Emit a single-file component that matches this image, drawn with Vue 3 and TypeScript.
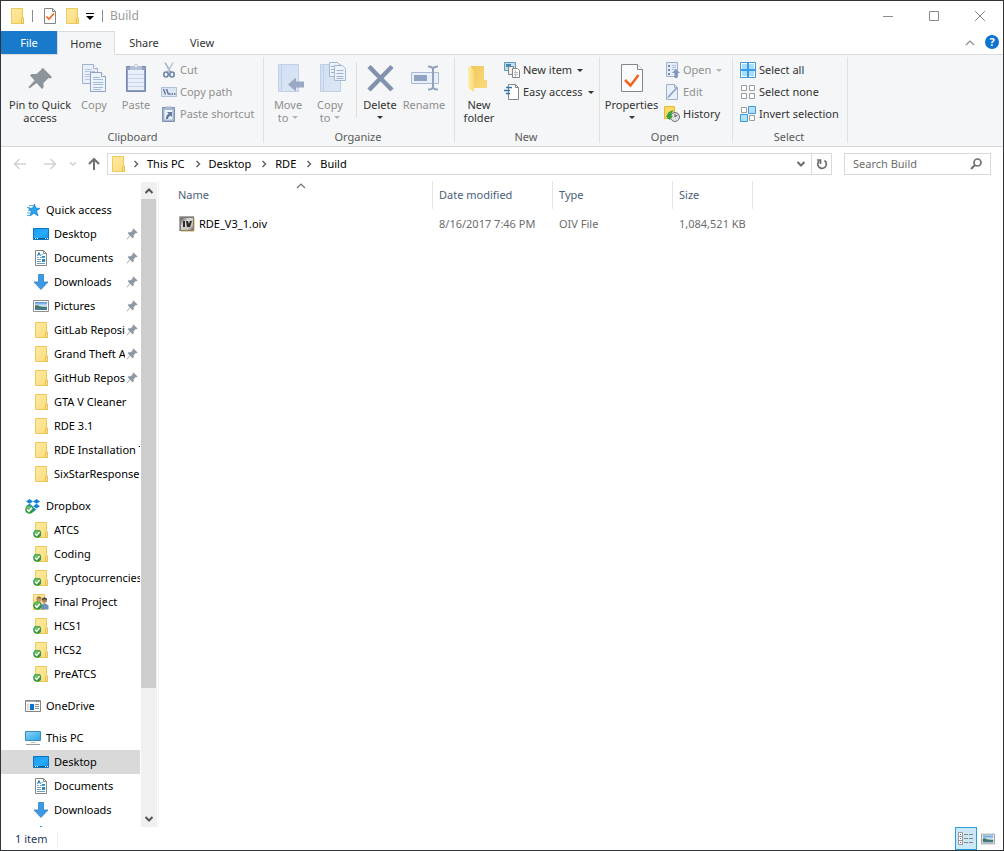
<script setup lang="ts">
import { ref } from 'vue'

interface Command {
  label: string
  icon: string
  disabled?: boolean
  menu?: boolean
}
interface BigCommand {
  lines: string[]
  icon: string
  size: string
  disabled?: boolean
  menu?: 'inline' | 'below'
  divided?: boolean
}
interface Group {
  name: string
  big: BigCommand[]
  small: Command[]
}
interface Place {
  label: string
  icon: string
  pinned?: boolean
  selected?: boolean
  root?: boolean
}

const tabs = ['Home', 'Share', 'View']
const activeTab = ref('Home')
const query = ref('')
const crumbs = ['This PC', 'Desktop', 'RDE', 'Build']

const groups: Group[] = [
  {
    name: 'Clipboard',
    big: [
      { lines: ['Pin to Quick', 'access'], icon: 'pin-big', size: 'wide' },
      { lines: ['Copy'], icon: 'copy', size: 'normal', disabled: true },
      { lines: ['Paste'], icon: 'paste', size: 'normal', disabled: true },
    ],
    small: [
      { label: 'Cut', icon: 'cut', disabled: true },
      { label: 'Copy path', icon: 'copy-path', disabled: true },
      { label: 'Paste shortcut', icon: 'paste-shortcut', disabled: true },
    ],
  },
  {
    name: 'Organize',
    big: [
      { lines: ['Move', 'to'], icon: 'move', size: 'normal', disabled: true, menu: 'inline' },
      { lines: ['Copy', 'to'], icon: 'copy-to', size: 'normal', disabled: true, menu: 'inline' },
      { lines: ['Delete'], icon: 'delete', size: 'mid', menu: 'below', divided: true },
      { lines: ['Rename'], icon: 'rename', size: 'normal', disabled: true },
    ],
    small: [],
  },
  {
    name: 'New',
    big: [{ lines: ['New', 'folder'], icon: 'new-folder', size: 'normal' }],
    small: [
      { label: 'New item', icon: 'new-item', menu: true },
      { label: 'Easy access', icon: 'easy-access', menu: true },
    ],
  },
  {
    name: 'Open',
    big: [{ lines: ['Properties'], icon: 'properties', size: 'props', menu: 'below' }],
    small: [
      { label: 'Open', icon: 'open', disabled: true, menu: true },
      { label: 'Edit', icon: 'edit', disabled: true },
      { label: 'History', icon: 'history' },
    ],
  },
  {
    name: 'Select',
    big: [],
    small: [
      { label: 'Select all', icon: 'select-all' },
      { label: 'Select none', icon: 'select-none' },
      { label: 'Invert selection', icon: 'select-invert' },
    ],
  },
]

const sections: Place[][] = [
  [
    { label: 'Quick access', icon: 'star', root: true },
    { label: 'Desktop', icon: 'desktop', pinned: true },
    { label: 'Documents', icon: 'documents', pinned: true },
    { label: 'Downloads', icon: 'downloads', pinned: true },
    { label: 'Pictures', icon: 'pictures', pinned: true },
    { label: 'GitLab Repositories', icon: 'folder', pinned: true },
    { label: 'Grand Theft Auto V', icon: 'folder', pinned: true },
    { label: 'GitHub Repositories', icon: 'folder', pinned: true },
    { label: 'GTA V Cleaner', icon: 'folder' },
    { label: 'RDE 3.1', icon: 'folder' },
    { label: 'RDE Installation Tool', icon: 'folder' },
    { label: 'SixStarResponse', icon: 'folder' },
  ],
  [
    { label: 'Dropbox', icon: 'dropbox', root: true },
    { label: 'ATCS', icon: 'folder-ok' },
    { label: 'Coding', icon: 'folder-ok' },
    { label: 'Cryptocurrencies', icon: 'folder-ok' },
    { label: 'Final Project', icon: 'folder-shared' },
    { label: 'HCS1', icon: 'folder-ok' },
    { label: 'HCS2', icon: 'folder-ok' },
    { label: 'PreATCS', icon: 'folder-ok' },
  ],
  [{ label: 'OneDrive', icon: 'onedrive', root: true }],
  [
    { label: 'This PC', icon: 'pc', root: true },
    { label: 'Desktop', icon: 'desktop', selected: true },
    { label: 'Documents', icon: 'documents' },
    { label: 'Downloads', icon: 'downloads' },
    { label: 'Music', icon: 'music' },
  ],
]

const files = [{ name: 'RDE_V3_1.oiv', date: '8/16/2017 7:46 PM', type: 'OIV File', size: '1,084,521 KB' }]
</script>

<template>
  <svg class="defs" aria-hidden="true">
    <defs>
      <linearGradient id="g-folder" x1="0" y1="0" x2="1" y2="1">
        <stop offset="0" stop-color="#ffeaa4" /><stop offset="1" stop-color="#fbdc7b" />
      </linearGradient>
      <linearGradient id="g-flap" x1="0" y1="0" x2="1" y2="0">
        <stop offset="0" stop-color="#ffefae" /><stop offset="1" stop-color="#f9d776" />
      </linearGradient>
      <linearGradient id="g-body" x1="0" y1="0" x2="1" y2="1">
        <stop offset="0" stop-color="#f0c75a" /><stop offset="1" stop-color="#fbd97d" />
      </linearGradient>
      <linearGradient id="g-screen" x1="0" y1="0" x2="1" y2="1">
        <stop offset="0" stop-color="#149df5" /><stop offset="0.55" stop-color="#2aaaff" /><stop offset="1" stop-color="#0b8fe8" />
      </linearGradient>
      <linearGradient id="g-pc" x1="0" y1="0" x2="1" y2="1">
        <stop offset="0" stop-color="#8ed6f8" /><stop offset="1" stop-color="#27a4e8" />
      </linearGradient>
      <linearGradient id="g-photo" x1="0" y1="0" x2="0" y2="1">
        <stop offset="0" stop-color="#4b8fdc" /><stop offset="0.5" stop-color="#e3f2fa" /><stop offset="0.7" stop-color="#4f7d80" /><stop offset="1" stop-color="#3c74ab" />
      </linearGradient>
      <linearGradient id="g-blue" x1="0" y1="0" x2="1" y2="1">
        <stop offset="0" stop-color="#d3e0f3" /><stop offset="1" stop-color="#dbe5f4" />
      </linearGradient>
      <linearGradient id="g-oiv" x1="0" y1="0" x2="1" y2="1">
        <stop offset="0" stop-color="#5f5d59" /><stop offset="0.35" stop-color="#d9d8d5" /><stop offset="0.75" stop-color="#c4c2bd" /><stop offset="1" stop-color="#6b6862" />
      </linearGradient>
    </defs>

    <symbol id="folder" viewBox="0 0 16 16">
      <path d="M2.500.5h11v11.500l1 0v3.500h-12z" fill="url(#g-folder)" stroke="#ecca5c" />
      <path d="M12.500 15.500v-4.500l1-1h1v5.500z" fill="#ffe79a" stroke="#e5bf4b" />
    </symbol>
    <symbol id="ok-badge" viewBox="0 0 9 9">
      <circle cx="4.500" cy="4.500" r="4.300" fill="#2f9a3c" />
      <circle cx="4.200" cy="3.500" r="2.800" fill="#64bd67" />
      <path d="M2.200 4.500l1.700 1.800L6.900 2.800" fill="none" stroke="#fff" stroke-width="1.500" />
    </symbol>
    <symbol id="folder-ok" viewBox="0 0 16 16">
      <use href="#folder" width="16" height="16" />
      <use href="#ok-badge" x="0" y="7.500" width="8.500" height="8.500" />
    </symbol>
    <symbol id="folder-shared" viewBox="0 0 16 16">
      <path d="M.5.5h11v15h-11z" fill="url(#g-folder)" stroke="#ecca5c" />
      <circle cx="6" cy="5" r="2.600" fill="#c9975d" /><path d="M3.500 4.500a2.600 2.600 0 0 1 5 0z" fill="#8d7342" />
      <path d="M2.500 13V9.500q3-3 6 0V13z" fill="#b7bd9a" />
      <circle cx="11.500" cy="6.200" r="2.500" fill="#a9825f" /><path d="M8.900 6a2.600 2.600 0 0 1 5.200 0q-2-1.500-5.200 0z" fill="#3f3d3c" />
      <path d="M8 15.500v-4q3.500-4 7.500 0v4z" fill="#6d91b8" />
      <use href="#ok-badge" x="0" y="7" width="9" height="9" />
    </symbol>
    <symbol id="star" viewBox="0 0 16 16">
      <path d="M9.500 2l1.200 4 4.300.4-3.500 2.500 1.500 5-4-2.700-4 2.800 1.200-4.800L3.500 6.700l4.200-.7z" fill="#29a3ee" stroke="#1478cb" stroke-width=".7" />
      <path d="M4 3.500h4M2 5.500h3M3 8.500h2M2 11h3M2 13.500h3" stroke="#4faff0" />
    </symbol>
    <symbol id="desktop" viewBox="0 0 16 16">
      <path d="M.5 2.500h15v11H.5z" fill="url(#g-screen)" stroke="#0c75bd" />
      <path d="M1 12.500h14" stroke="#0a5c9b" /><path d="M2 12.500h1M4 12.500h1M12 12.500h1M14 12.500h1" stroke="#fff" />
    </symbol>
    <symbol id="documents" viewBox="0 0 16 16">
      <path d="M2.500.5h8l3 3v12h-11z" fill="#fff" stroke="#858585" /><path d="M10.500.5v3h3" fill="none" stroke="#858585" />
      <path d="M4.500 6l1.500-3.500L7.500 6M5 4.500h2M8.500 4.500h1M9 6.500h3" fill="none" stroke="#2085c9" />
      <path d="M4 7.500h2M7 7.500h5M4 9.500h4M4 11.500h4M4 13.500h8" stroke="#6f9fbd" /><path d="M9 9h3v3H9z" fill="#2a84c7" />
    </symbol>
    <symbol id="downloads" viewBox="0 0 16 16">
      <path d="M5.500.5h5V8h4.500L8 15.500 1 8h4.500z" fill="#3d9ae5" stroke="#2b80c7" stroke-width=".8" />
    </symbol>
    <symbol id="pictures" viewBox="0 0 16 16">
      <path d="M.5 2.500h15v11H.5z" fill="#fff" stroke="#8f8f8f" /><path d="M2 4h12v8H2z" fill="url(#g-photo)" />
      <path d="M2 7.500q3-1 5 1l7 1V10H2z" fill="#48755e" />
    </symbol>
    <symbol id="dropbox" viewBox="0 0 16 16">
      <path d="M4.500 1l3.500 2.400-3.500 2.400L1 3.400zM11.500 1L15 3.400l-3.500 2.400L8 3.400zM4.500 5.800L8 8.200l-3.500 2.400L1 8.200zM11.500 5.800L15 8.200l-3.500 2.400L8 8.200zM8 9.200l3.500 2.400L8 14l-2-2z" fill="#1681de" />
      <use href="#ok-badge" x="0" y="7" width="9" height="9" />
    </symbol>
    <symbol id="onedrive" viewBox="0 0 16 16">
      <path d="M.5 2.500h15v11H.5z" fill="#fafafa" stroke="#858585" /><path d="M1 3.500h14" stroke="#b2b2b2" /><path d="M11 3.500h4" stroke="#666" stroke-dasharray="1 1" />
      <path d="M5 6h4v6H5z" fill="#0b6fd0" /><path d="M2 6h2v6H2z" fill="#dedede" /><path d="M10 6.500h4M10 8.500h4M10 10.500h4" stroke="#8f8f8f" />
    </symbol>
    <symbol id="pc" viewBox="0 0 16 16">
      <path d="M.5 1.500h15v9H.5z" fill="url(#g-pc)" stroke="#3c8abb" /><path d="M6 12.500h4" stroke="#b4c4cd" /><path d="M1 14.500h14" stroke="#8da0ac" />
    </symbol>
    <symbol id="music" viewBox="0 0 16 16">
      <path d="M7 0h2v2l4 3v3L9 6v6a3 3 0 1 1-2-2z" fill="#1e9be9" />
    </symbol>
    <symbol id="pin" viewBox="0 0 12 12">
      <path d="M7.500.5l4 4-.8.800-.900-.2L7.700 7.300v2.200l-.900.9-2.400-2.400L1 11.500l-.5-.5L4 7.600 1.600 5.200l.9-.9 2.200 0L6.900 2.200l-.2-.9z" fill="#8c98a4" />
    </symbol>

    <symbol id="pin-big" viewBox="0 0 32 32">
      <path d="M19 6l9 9-1.500 1.500-2-.5-5 5v4.500L18 27l-5.500-6-7 5.500L4.500 25l6-6.500-4.500-5L7.500 12h5l5-4.500-.5-.5z" fill="#8c949c" />
    </symbol>
    <symbol id="copy" viewBox="0 0 32 32">
      <g fill="#e9f0fa" stroke="#9eb0cd"><path d="M4.500 2.500h11l4 4v15h-15z" /><path d="M15.500 2.500v4h4" fill="#fff" /></g>
      <path d="M7 7.500h7M7 9.500h10M7 12.500h10M7 14.500h10M7 17.500h10" stroke="#b5c6e0" />
      <g fill="#edf3fb" stroke="#8fa3c3"><path d="M12.500 10.500h11l4 4v15h-15z" /><path d="M23.500 10.500v4h4" fill="#fff" /></g>
      <path d="M15 15.500h7M15 17.500h10M15 20.500h10M15 22.500h10M15 25.500h10M15 27.500h8" stroke="#a8bbda" />
    </symbol>
    <symbol id="paste" viewBox="0 0 32 32">
      <path d="M6.500 4.500h19v25h-19z" fill="#8fa2c4" stroke="#7489ad" /><path d="M8 8h16v20H8z" fill="#e9f0fb" />
      <path d="M8 12.500h16M8 16.500h16M8 20.500h16M8 24.500h16" stroke="#c6d5ec" /><path d="M10 4h4a2 2 0 0 1 4 0h4v4H10z" fill="#b5c2d6" /><path d="M15 3h2v2h-2z" fill="#f3f6fa" />
    </symbol>
    <symbol id="cut" viewBox="0 0 16 16">
      <path d="M3 0l2 1 5.500 9-1.500 1z" fill="#9cabbf" /><path d="M13 0l-2 1L5.500 10 7 11z" fill="#b7c4d6" />
      <ellipse cx="5" cy="12.500" rx="2.200" ry="2.500" fill="none" stroke="#6f86ab" stroke-width="1.600" /><ellipse cx="11" cy="12.500" rx="2.200" ry="2.500" fill="none" stroke="#6f86ab" stroke-width="1.600" />
    </symbol>
    <symbol id="copy-path" viewBox="0 0 16 16">
      <path d="M.5 3.500h15v9H.5z" fill="#dce6f4" stroke="#b0bfd6" /><path d="M2.500 5l2 5.500M5.500 5l2 5.500" stroke="#53688c" stroke-width="1.200" /><path d="M8 10h1.500M10.500 10H12M13 10h1.500" stroke="#53688c" stroke-width="1.500" />
    </symbol>
    <symbol id="paste-shortcut" viewBox="0 0 16 16">
      <path d="M1.500 1.500h12v14h-12z" fill="#a4b5d0" stroke="#7c91b5" /><path d="M3.500 4h8v9.500h-8z" fill="#edf3fb" /><path d="M4.500.5h6v3h-6z" fill="#a9b8cf" />
      <path d="M6 6h5v5l-1.500-1.500Q7 10.500 7 13H5q-.5-3.500 2.700-5.300z" fill="#60789f" />
    </symbol>
    <symbol id="move" viewBox="0 0 32 32">
      <path d="M6.500 2.500h20v27h-20z" fill="url(#g-blue)" stroke="#bfd0e7" /><path d="M9.500 3v26" stroke="#bed0e8" />
      <path d="M16 22.500l8-7v4h8v6h-8v4z" fill="#99a8c3" />
    </symbol>
    <symbol id="copy-to" viewBox="0 0 32 32">
      <path d="M6.500 2.500h20v27h-20z" fill="url(#g-blue)" stroke="#bfd0e7" /><path d="M9.500 3v26" stroke="#bed0e8" />
      <g fill="#edf3fb" stroke="#a5b7d1"><path d="M15.500.5h8l3 3v11h-11z" /><path d="M20.500 3.500h8l3 3v12h-11z" /></g>
      <path d="M17 4.500h3M17 7.500h3M17 10.500h3M22.500 8.500h7M22.500 11.500h7M22.500 14.500h7M22.500 16.500h7" stroke="#9fb1cf" />
    </symbol>
    <symbol id="delete" viewBox="0 0 32 32">
      <path d="M5 4.500L28 28M28 4.500L5 28" stroke="#8291ad" stroke-width="4.500" />
    </symbol>
    <symbol id="rename" viewBox="0 0 32 32">
      <path d="M3.500 10.500h27v11h-27z" fill="#e8effa" stroke="#a9bad4" /><path d="M6 13h13v6H6z" fill="#8fa2c2" />
      <path d="M20 4.500q5 0 5 3v17q0 3-5 3M30 4.500q-5 0-5 3M30 27.500q-5 0-5-3" fill="none" stroke="#91a2be" stroke-width="2" />
    </symbol>
    <symbol id="new-folder" viewBox="0 0 32 32">
      <path d="M8 4h13v14h3v8H10z" fill="url(#g-body)" /><path d="M5 4l6 4v22l-6-4z" fill="url(#g-flap)" />
    </symbol>
    <symbol id="properties" viewBox="0 0 32 32">
      <path d="M5.500 2.500h16l5 5v22h-21z" fill="#fafbfc" stroke="#868686" /><path d="M21.500 2.500v5h5" fill="#fff" stroke="#868686" />
      <path d="M9 18l5.500 5.500L22.500 13" fill="none" stroke="#f2651f" stroke-width="2.500" />
    </symbol>
    <symbol id="props-small" viewBox="0 0 16 16">
      <path d="M2.500.5h8l3 3v12h-11z" fill="#fff" stroke="#858585" /><path d="M10.500.5v3h3" fill="none" stroke="#858585" /><path d="M4.500 8.500l2.500 2.500 5-5.500" fill="none" stroke="#f2651f" stroke-width="1.700" />
    </symbol>
    <symbol id="new-item" viewBox="0 0 16 16">
      <path d="M.5.5h11v8H.5z" fill="#c6dff0" stroke="#5d98bb" /><path d="M2 2h5v3H2z" fill="#3d86b5" />
      <path d="M4.500 4.500h5v8h-5z" fill="#eee" stroke="#858585" /><path d="M8.500 6.500h5l2 2v7h-7z" fill="#fff" stroke="#858585" /><path d="M10 10.500h4M10 12.500h4" stroke="#a6bde0" /><path d="M11.500 8v7" stroke="#e0b7b7" />
    </symbol>
    <symbol id="easy-access" viewBox="0 0 16 16">
      <path d="M4.500.5h7l3 3v12h-10z" fill="#fff" stroke="#858585" /><path d="M11.500.5v3h3" fill="none" stroke="#858585" /><path d="M2 3.500h6M0 6.500h6M2 9.500h4" stroke="#3574a8" stroke-width="1.500" />
    </symbol>
    <symbol id="open" viewBox="0 0 16 16">
      <path d="M2.500.5h11v14h-11z" fill="#e6edf8" stroke="#a1b1cc" /><path d="M4 3h2v2H4zM4 7h2v2H4zM4 11h2v2H4z" fill="#6f88b0" /><path d="M8 3.500h4M8 5.500h4M8 7.500h4" stroke="#b1c1d9" /><path d="M12 7l4 4h-2.500v5h-3v-5H8z" fill="#7f96bb" />
    </symbol>
    <symbol id="edit" viewBox="0 0 16 16">
      <path d="M2.500.5h8l3 3v12h-11z" fill="#e9f0fa" stroke="#a1b1cc" /><path d="M10.500.5v3h3" fill="none" stroke="#a1b1cc" /><path d="M13.500 4.500L5.500 13l-2.500 1.500L4 12l8-8.500z" fill="#91a6c9" />
    </symbol>
    <symbol id="history" viewBox="0 0 16 16">
      <path d="M.5.5h10v12H.5z" fill="#fcd965" stroke="#e9b935" /><circle cx="11" cy="11" r="4.500" fill="#dedede" stroke="#707070" /><path d="M11 8v3l2.500-2" fill="none" stroke="#555" />
      <path d="M3 9q2-5 7-4.500Q7 6 7.500 10H9l-3.500 4L2 10.500z" fill="#35a33e" />
    </symbol>
    <symbol id="select-all" viewBox="0 0 16 16">
      <path d="M.5.5h15v15H.5z" fill="#fff" stroke="#3a9ae8" /><path d="M2 2h5v5H2zM9 2h5v5H9zM2 9h5v5H2zM9 9h5v5H9z" fill="#a9dcfb" /><path d="M8 0v16M0 8h16" stroke="#3a9ae8" stroke-width="2" />
    </symbol>
    <symbol id="select-none" viewBox="0 0 16 16">
      <path d="M1.500 1.500h5v5h-5zM9.500 1.500h5v5h-5zM1.500 9.500h5v5h-5zM9.500 9.500h5v5h-5z" fill="#fff" stroke="#9c9c9c" />
    </symbol>
    <symbol id="select-invert" viewBox="0 0 16 16">
      <path d="M1.500 1.500h5v5h-5zM9.500 9.500h5v5h-5z" fill="#fff" stroke="#9c9c9c" /><path d="M8.500.5h7v7h-7zM.5 8.500h7v7h-7z" fill="#b5e0fb" stroke="#3a9ae8" />
    </symbol>

    <symbol id="arrow-left" viewBox="0 0 14 14"><path d="M13 7H2M6.500 2L1.500 7l5 5" fill="none" stroke="currentColor" stroke-width="1.500" /></symbol>
    <symbol id="arrow-right" viewBox="0 0 14 14"><path d="M1 7h11M7.500 2l5 5-5 5" fill="none" stroke="currentColor" stroke-width="1.500" /></symbol>
    <symbol id="arrow-up" viewBox="0 0 14 14"><path d="M7 13V2M2 7l5-5 5 5" fill="none" stroke="currentColor" stroke-width="2" /></symbol>
    <symbol id="chev-down" viewBox="0 0 10 10"><path d="M1.500 3L5 6.500 8.500 3" fill="none" stroke="currentColor" stroke-width="2" /></symbol>
    <symbol id="chev-up" viewBox="0 0 10 10"><path d="M1.500 7L5 3.500 8.500 7" fill="none" stroke="currentColor" stroke-width="2" /></symbol>
    <symbol id="chev-thin" viewBox="0 0 10 10"><path d="M1 7l4-4 4 4" fill="none" stroke="currentColor" stroke-width="1.200" /></symbol>
    <symbol id="chev-right" viewBox="0 0 8 8"><path d="M2.500 1l3 3-3 3" fill="none" stroke="currentColor" stroke-width="1.500" /></symbol>
    <symbol id="refresh" viewBox="0 0 12 12"><path d="M8.500 2.500A4.300 4.300 0 1 1 3 3M4.500 6V2H1" fill="none" stroke="currentColor" stroke-width="1.700" /></symbol>
    <symbol id="search" viewBox="0 0 12 12"><circle cx="7.500" cy="4.500" r="3.500" fill="none" stroke="currentColor" stroke-width="1.700" /><path d="M5 7L1 11" stroke="currentColor" stroke-width="2" /></symbol>
    <symbol id="minimize" viewBox="0 0 12 12"><path d="M1 6.500h10" stroke="currentColor" /></symbol>
    <symbol id="maximize" viewBox="0 0 12 12"><path d="M1.500 1.500h9v9h-9z" fill="none" stroke="currentColor" /></symbol>
    <symbol id="close" viewBox="0 0 12 12"><path d="M1 1l10 10M11 1L1 11" stroke="currentColor" /></symbol>
    <symbol id="oiv" viewBox="0 0 16 16">
      <path d="M1 1h14v14H1z" fill="#4d4b48" /><path d="M1 15V1h14" fill="none" stroke="#8d8b87" stroke-width="1.500" /><path d="M15 2v13H2" fill="none" stroke="#c9b06a" stroke-width="1" />
      <path d="M2 2h12v12H2z" fill="url(#g-oiv)" /><path d="M4 5h2v6H4zM7 5h2l1 3 1-3h2l-2 6H8z" fill="#2c2c2c" />
    </symbol>
    <symbol id="view-details" viewBox="0 0 16 16">
      <path d="M.5 1.500h4v12h-4zM.5 5.500h4M.5 9.500h4" fill="#fff" stroke="#999" /><path d="M2 3.500h1" stroke="#555" /><path d="M2 7.500h1" stroke="#248bd2" /><path d="M2 11.500h1" stroke="#d43a3a" />
      <path d="M6 3.500h4M11 3.500h4M6 7.500h4M11 7.500h4M6 11.500h4M11 11.500h4" stroke="#858585" />
    </symbol>
  </svg>

  <div class="window">
    <header class="titlebar">
      <svg class="i16"><use href="#folder" /></svg>
      <span class="bar first"></span>
      <button class="quick" aria-label="Properties"><svg class="i16"><use href="#props-small" /></svg></button>
      <button class="quick" aria-label="New folder"><svg class="i16"><use href="#folder" /></svg></button>
      <button class="customize" aria-label="Customize Quick Access Toolbar"><span class="dash"></span><span class="caret"></span></button>
      <span class="bar"></span>
      <h1 class="title">Build</h1>
      <button class="caption" aria-label="Minimize"><svg class="i12"><use href="#minimize" /></svg></button>
      <button class="caption" aria-label="Maximize"><svg class="i12"><use href="#maximize" /></svg></button>
      <button class="caption" aria-label="Close"><svg class="i12"><use href="#close" /></svg></button>
    </header>

    <nav class="tabs" aria-label="Ribbon tabs">
      <button class="tab file">File</button>
      <button v-for="t in tabs" :key="t" class="tab" :class="{ active: t === activeTab }" @click="activeTab = t">{{ t }}</button>
      <span class="grow"></span>
      <button class="collapse" aria-label="Minimize the Ribbon"><svg class="i10"><use href="#chev-thin" /></svg></button>
      <button class="help" aria-label="Help">?</button>
    </nav>

    <section class="ribbon">
      <div v-for="g in groups" :key="g.name" class="group" :class="g.name.toLowerCase()">
        <div class="commands">
          <template v-for="b in g.big" :key="b.icon">
            <span v-if="b.divided" class="divider"></span>
            <button class="big" :class="b.size" :disabled="b.disabled">
              <svg class="i32"><use :href="'#' + b.icon" /></svg>
              <span v-for="(line, n) in b.lines" :key="line" class="line">{{ line }}<span v-if="b.menu === 'inline' && n === 1" class="caret after"></span></span>
              <span v-if="b.menu === 'below'" class="line"><span class="caret"></span></span>
            </button>
          </template>
          <div v-if="g.small.length" class="stack">
            <button v-for="c in g.small" :key="c.label" class="small" :disabled="c.disabled">
              <svg class="i16"><use :href="'#' + c.icon" /></svg>
              <span>{{ c.label }}</span>
              <span v-if="c.menu" class="caret"></span>
            </button>
          </div>
        </div>
        <div class="group-name">{{ g.name }}</div>
      </div>
    </section>

    <div class="address-row">
      <button class="nav" disabled aria-label="Back"><svg class="i14"><use href="#arrow-left" /></svg></button>
      <button class="nav" disabled aria-label="Forward"><svg class="i14"><use href="#arrow-right" /></svg></button>
      <button class="nav recent" disabled aria-label="Recent locations"><svg class="i8"><use href="#chev-down" /></svg></button>
      <button class="nav up" aria-label="Up"><svg class="i14"><use href="#arrow-up" /></svg></button>
      <div class="address">
        <svg class="i16"><use href="#folder" /></svg>
        <template v-for="c in crumbs" :key="c">
          <svg class="i8 sep"><use href="#chev-right" /></svg>
          <button class="crumb">{{ c }}</button>
        </template>
        <span class="grow"></span>
        <button class="tool" aria-label="Previous locations"><svg class="i10"><use href="#chev-down" /></svg></button>
        <button class="tool reload" aria-label="Refresh"><svg class="i12"><use href="#refresh" /></svg></button>
      </div>
      <label class="search">
        <input v-model="query" type="text" placeholder="Search Build" aria-label="Search Build" />
        <svg class="i12"><use href="#search" /></svg>
      </label>
    </div>

    <main class="content">
      <nav class="tree" aria-label="Navigation pane">
        <ul v-for="(s, n) in sections" :key="n">
          <li v-for="p in s" :key="p.label">
            <a href="#" class="place" :class="{ root: p.root, selected: p.selected }">
              <svg class="i16"><use :href="'#' + p.icon" /></svg>
              <span class="place-name">{{ p.label }}</span>
              <svg v-if="p.pinned" class="i12"><use href="#pin" /></svg>
            </a>
          </li>
        </ul>
      </nav>
      <div class="scrollbar">
        <button aria-label="Scroll up"><svg class="i10"><use href="#chev-up" /></svg></button>
        <div class="track"><div class="thumb"></div></div>
        <button aria-label="Scroll down"><svg class="i10"><use href="#chev-down" /></svg></button>
      </div>
      <div class="files">
        <table>
          <colgroup><col class="c-name" /><col class="c-mid" /><col class="c-mid" /><col class="c-size" /></colgroup>
          <thead>
            <tr>
              <th scope="col">Name<svg class="i10 sort"><use href="#chev-thin" /></svg></th>
              <th scope="col">Date modified</th>
              <th scope="col">Type</th>
              <th scope="col">Size</th>
            </tr>
          </thead>
          <tbody>
            <tr v-for="f in files" :key="f.name">
              <td><span class="file-name"><svg class="i16"><use href="#oiv" /></svg>{{ f.name }}</span></td>
              <td>{{ f.date }}</td>
              <td>{{ f.type }}</td>
              <td class="num">{{ f.size }}</td>
            </tr>
          </tbody>
        </table>
      </div>
    </main>

    <footer class="status">
      <span class="count">1 item</span>
      <span class="grow"></span>
      <button class="view on" aria-label="Details view"><svg class="i16"><use href="#view-details" /></svg></button>
      <button class="view" aria-label="Large icons view"><svg class="i14"><use href="#pictures" /></svg></button>
    </footer>
  </div>
</template>

<style>
body { margin: 0; }
</style>

<style scoped>
* { box-sizing: border-box; }
.defs { position: absolute; width: 0; height: 0; }
svg { display: block; flex: none; }
.i8 { width: 8px; height: 8px; }
.i10 { width: 10px; height: 10px; }
.i12 { width: 12px; height: 12px; }
.i14 { width: 14px; height: 14px; }
.i16 { width: 16px; height: 16px; }
.i32 { width: 32px; height: 32px; }
.grow { flex: 1; }

.window {
  display: flex;
  flex-direction: column;
  height: 100vh;
  border: 1px solid #333438;
  background: #fff;
  color: #000;
  font: 11px/16px "Segoe UI", "Noto Sans", sans-serif;
}
button {
  display: flex;
  align-items: center;
  justify-content: center;
  margin: 0;
  padding: 0;
  border: 0;
  background: none;
  color: inherit;
  font: inherit;
  white-space: nowrap;
}
.caret {
  flex: none;
  width: 0;
  height: 0;
  border: 3px solid transparent;
  border-top-color: currentColor;
  border-bottom: 0;
}

.titlebar { display: flex; flex: none; align-items: center; height: 30px; padding-left: 8px; }
.bar { width: 1px; height: 12px; background: #8a8a8a; }
.bar.first { margin: 0 6px 0 7px; }
.quick { width: 22px; height: 22px; }
.customize { flex-direction: column; gap: 2px; width: 14px; margin-right: 5px; }
.customize .caret { border-width: 4px 4px 0; }
.dash { width: 8px; height: 1px; background: #000; }
.title { flex: 1; margin: 0 0 0 7px; color: #999; font-size: 12px; font-weight: 400; line-height: 16px; }
.caption { width: 46px; height: 30px; color: #8c8c8c; }

.tabs { display: flex; flex: none; height: 24px; border-bottom: 1px solid #dadbdc; }
.tab { height: 23px; width: 58px; color: #333; }
.tab.file { width: 56px; background: #1979ca; color: #fff; }
.tab.active { height: 24px; border: 1px solid #dadbdc; border-bottom: 0; background: #f5f6f7; }
.collapse { width: 24px; color: #8a8a8a; }
.help {
  width: 14px;
  height: 14px;
  margin: 4px 4px 0 3px;
  border-radius: 50%;
  background: #0d72d0;
  color: #fff;
  font-weight: 700;
}

.ribbon {
  display: flex;
  flex: none;
  padding: 2px 0 3px;
  border-bottom: 1px solid #d6d7d8;
  background: #f5f6f7;
  color: #333;
}
.group { padding: 2px 0 0 3px; border-right: 1px solid #e0e1e3; }
.group.clipboard { width: 263px; padding-left: 6px; }
.group.organize { width: 191px; }
.group.new { width: 145px; }
.group.open { width: 133px; }
.group.select { width: 115px; }
.commands { display: flex; height: 72px; }
.group-name { padding-right: 5px; color: #5a5a5a; line-height: 12px; text-align: center; }
.big { flex: none; flex-direction: column; justify-content: flex-start; width: 42px; padding-top: 3px; line-height: 13px; }
.big.wide { width: 66px; }
.big.mid { width: 46px; }
.big.props { width: 57px; }
.big .i32 { margin-bottom: 4px; }
.line { display: flex; align-items: center; height: 13px; }
.after { margin-left: 4px; }
button:disabled { color: #8f8f8f; }
button:disabled .caret { color: #b5b5b5; }
.divider { width: 1px; height: 56px; margin: 3px 0 0 5px; background: #dcdde0; }
.stack { margin-left: 4px; }
.small { gap: 3px; height: 22px; }
.small .caret { margin-left: 2px; }

.address-row { display: flex; flex: none; align-items: center; height: 33px; padding: 0 12px 0 4px; }
.nav { flex: none; width: 30px; height: 22px; color: #707070; }
.nav:disabled { color: #d2d2d2; }
.nav.recent { width: 16px; }
.nav.up { width: 26px; }
.address { display: flex; flex: 1; align-items: center; height: 22px; padding-left: 2px; border: 1px solid #d9d9d9; }
.address .sep { margin: 0 4px 0 6px; color: #666; }
.crumb { padding: 0 3px; }
.tool { width: 20px; height: 20px; color: #6d6d6d; }
.tool.reload { border-left: 1px solid #d9d9d9; }
.search { display: flex; flex: none; align-items: center; width: 147px; height: 22px; margin-left: 12px; padding: 0 8px; border: 1px solid #d9d9d9; color: #707070; }
.search input { flex: 1; min-width: 0; padding: 0; border: 0; outline: 0; background: none; font: inherit; }
.search input::placeholder { color: #6d6d6d; opacity: 1; }

.content { display: flex; flex: 1; min-height: 0; }
.tree { flex: none; width: 140px; padding-top: 18px; overflow: hidden; }
.tree ul { margin: 0 0 8px; padding: 0; list-style: none; }
.place { display: flex; align-items: center; gap: 5px; height: 24px; padding: 0 1px 0 32px; color: #000; text-decoration: none; }
.place.root { padding-left: 24px; }
.place.selected { margin-right: 1px; background: #d9d9d9; }
.place-name { flex: 1; overflow: hidden; white-space: nowrap; }
.place .i12 { margin: 0 2px 0 -4px; }
.scrollbar { display: flex; flex: none; flex-direction: column; width: 16px; margin-top: 2px; background: #f0f0f0; }
.scrollbar button { height: 17px; color: #555; }
.track { flex: 1; }
.thumb { height: 80%; margin-right: 1px; background: #cdcdcd; }
.files { flex: 1; margin-left: 1px; border-left: 1px solid #f3f3f3; overflow: hidden; }
table { width: 594px; margin-top: 1px; border-collapse: separate; border-spacing: 0; table-layout: fixed; }
.c-name { width: 274px; }
.c-mid { width: 120px; }
.c-size { width: 80px; }
th, td { padding: 0 6px; text-align: left; font-weight: 400; white-space: nowrap; }
th { position: relative; height: 28px; border-right: 1px solid #e5e5e5; color: #4c607a; }
th:first-child { padding-left: 19px; }
td { height: 30px; color: #6d6d6d; }
td:first-child { padding-left: 20px; color: #000; }
td.num { padding-right: 8px; text-align: right; }
.file-name { display: flex; align-items: center; gap: 4px; }
.sort { position: absolute; top: 0; left: 50%; color: #707070; }

.status { display: flex; flex: none; align-items: center; height: 23px; padding-right: 4px; color: #1e395b; }
.count { padding: 0 10px 0 14px; border-right: 1px solid #f0f0f0; }
.view { width: 22px; height: 23px; }
.view.on { border: 1px solid #26a0da; background: #cce8f7; }
</style>
